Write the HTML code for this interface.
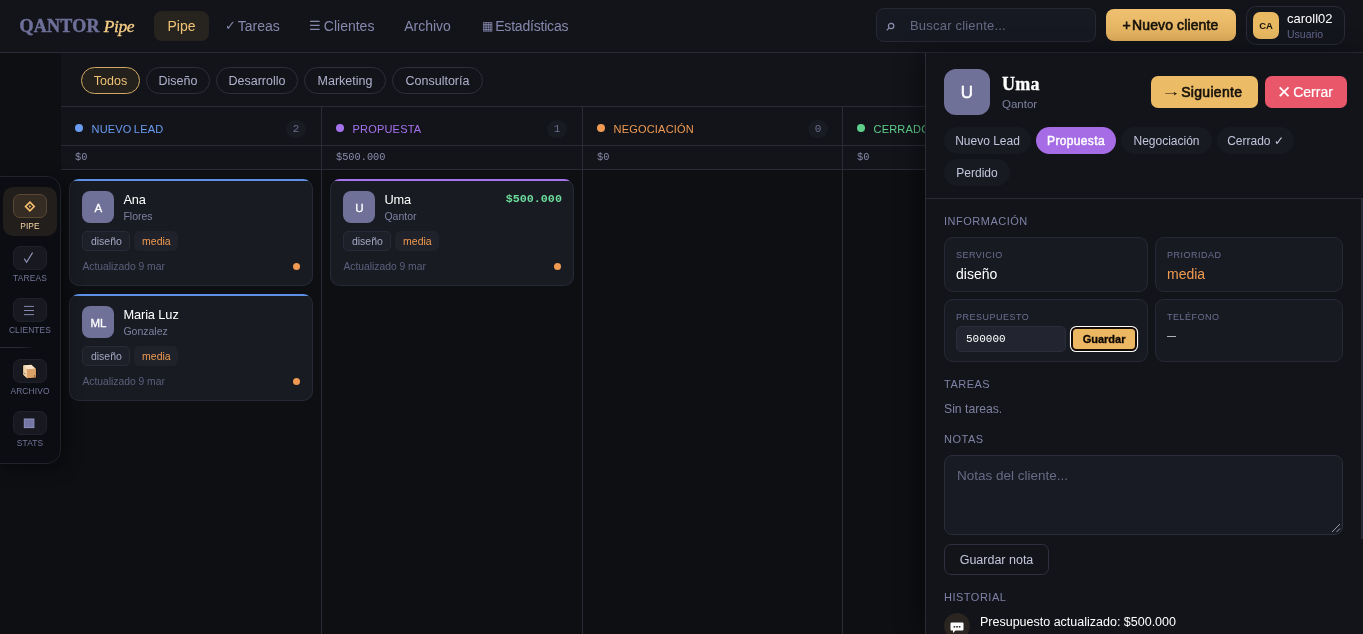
<!DOCTYPE html>
<html lang="es">
<head>
<meta charset="utf-8">
<title>Qantor Pipe</title>
<style>
*{box-sizing:border-box;margin:0;padding:0}
html,body{width:1363px;height:634px;overflow:hidden;background:#0e0f13;color:#fff;
  font-family:"Liberation Sans",sans-serif;font-size:14px}
.abs{position:absolute}
.mono{font-family:"Liberation Mono",monospace}
.serif{font-family:"Liberation Serif",serif}
#app{position:relative;width:1363px;height:634px;overflow:hidden;background:#0e0f13;will-change:transform}

/* ---------- top bar ---------- */
#top{position:absolute;left:0;top:0;width:1363px;height:53px;background:#13141a;border-bottom:1px solid #292b36}
#logo{position:absolute;left:19.6px;top:13.6px;height:24px;line-height:24px;font-size:18px;white-space:nowrap}
#logo b{font-weight:700;color:#6e7099;letter-spacing:.25px;-webkit-text-stroke:.45px #6e7099}
#logo i{color:#f5cd85;margin-left:4px;font-size:17.5px;letter-spacing:-.45px;-webkit-text-stroke:.35px #f5cd85}
.tab{position:absolute;top:11px;height:30px;line-height:30px;font-size:14px;color:#8688ad;white-space:nowrap;text-align:center;border-radius:8px}
.tab.on{background:#27241f;color:#f0c274}
.tab.l{text-align:left;padding-left:14px}
.tab .ic{display:inline-block;vertical-align:top;letter-spacing:0}
#search{position:absolute;left:876px;top:8px;width:220px;height:34px;border-radius:8px;background:#171922;border:1px solid #262935}
#search span{position:absolute;left:33px;top:0;line-height:33px;font-size:13px;color:#666a85;letter-spacing:.2px}
#newbtn{position:absolute;left:1106px;top:9px;width:130px;height:32px;border-radius:8px;background:linear-gradient(#efc170,#dfae5c);color:#14110a;font-weight:400;font-size:14px;line-height:32.5px;text-align:left;padding-left:16.5px;letter-spacing:.12px;-webkit-text-stroke:.6px #14110a;white-space:nowrap}
#user{position:absolute;left:1246px;top:6px;width:99px;height:39px;border-radius:10px;background:#14161d;border:1px solid #292b36}
#user .av{position:absolute;left:6px;top:5px;width:26px;height:27px;border-radius:7px;background:#e9b962;color:#15120b;font-size:9.5px;font-weight:700;line-height:27px;text-align:center}
#user .n{position:absolute;left:40px;top:4px;font-size:13px;line-height:16px;color:#fff}
#user .r{position:absolute;left:40px;top:20px;font-size:10.5px;line-height:14px;color:#62658a}

/* ---------- board ---------- */
#board{position:absolute;left:61px;top:53px;width:1302px;height:581px;background:#0e0f13}
#filters{position:absolute;left:0;top:0;width:1302px;height:54px;background:#13141a;border-bottom:1px solid #292b36}
.pill{position:absolute;top:14px;height:27px;line-height:26.5px;border-radius:14px;border:1px solid #2d2f3b;color:#b0b2cd;font-size:12.5px;text-align:center;white-space:nowrap}
.pill.on{border-color:#d0a862;color:#f0c274;background:#24201c}
.col{position:absolute;top:54px;width:261px;height:527px;border-right:1px solid #292b36}
.col .hd{position:absolute;left:0;top:0;right:0;height:39px;background:#13141a;border-bottom:1px solid #292b36}
.col .hd .dot{position:absolute;left:14px;top:17px;width:8px;height:8px;border-radius:50%}
.col .hd .t{position:absolute;left:30.5px;top:15px;line-height:14px;font-size:11px;letter-spacing:.2px;word-spacing:-1px;white-space:nowrap}
.col .hd .n{position:absolute;left:225px;top:12.5px;width:20px;height:18px;border-radius:9px;background:#191b23;color:#6a6d8c;font-size:11px;line-height:18px;text-align:center}
.col .tot{position:absolute;left:0;top:39px;right:0;height:24px;background:#13141a;border-bottom:1px solid #292b36;color:#8a8cac;font-size:10.3px;line-height:23px;padding-left:14px}
.card{position:absolute;left:8.4px;width:243.5px;height:107px;border-radius:10px;background:#191b23;box-shadow:inset 0 0 0 1px #262935;overflow:hidden}
.card .bar{position:absolute;left:0;right:0;top:0;height:2px}
.card .av{position:absolute;left:13px;top:12px;width:32px;height:32px;border-radius:8px;background:#6f7198;color:#fff;font-size:11.5px;font-weight:400;-webkit-text-stroke:.3px #fff;line-height:34px;text-align:center}
.card .nm{position:absolute;left:54px;top:13px;font-size:12.8px;letter-spacing:-.1px;line-height:16px;color:#fff}
.card .sub{position:absolute;left:54px;top:30px;font-size:10.5px;line-height:14px;color:#7d80a0}
.card .amt{position:absolute;right:12px;top:12.3px;font-size:11.7px;line-height:16px;color:#6cdc9c;font-weight:700}
.tag{position:absolute;top:52px;margin-left:1px;height:20px;line-height:18px;border-radius:5px;background:#1d1f29;border:1px solid #282b37;font-size:10.5px;text-align:center;color:#a4a7c2}
.tag.o{color:#f09a4e;border-color:#1f212b;background:#1f212b}
.card .upd{position:absolute;left:13px;top:81px;font-size:10.3px;line-height:14px;color:#5c5f7c}
.card .od{position:absolute;left:223.5px;top:83.5px;width:7.5px;height:7.5px;border-radius:50%;background:#ef9a52}

/* ---------- side nav ---------- */
#side{position:absolute;left:-1px;top:176px;width:62px;height:288px;background:#0c0d12;border:1px solid #1f212b;border-radius:0 14px 14px 0;box-shadow:4px 4px 18px rgba(0,0,0,.45)}
.si{position:absolute;left:3px;width:54px;height:49px;border-radius:10px}
.si.on{background:#211e1c}
.si .bx{position:absolute;left:10px;top:7px;width:34px;height:24px;border-radius:7px;background:#181920;border:1px solid #20222b}
.si.on .bx{background:#352c24;border-color:#594733}
.si .lb{position:absolute;left:-3px;top:35px;width:60px;text-align:center;font-size:8.4px;line-height:9px;letter-spacing:.15px;color:#74779b;padding-left:0}
.si.on .lb{color:#f3d7a4}
.si svg{position:absolute;left:-1px;top:-1px}

/* ---------- drawer ---------- */
#drawer{position:absolute;left:925px;top:53px;width:438px;height:581px;background:#13141a;border-left:1px solid #292b36;box-shadow:-6px 0 22px rgba(0,0,0,.42)}
#dhead{position:absolute;left:0;top:0;width:437px;height:146px;border-bottom:1px solid #292b36}
#dav{position:absolute;left:18px;top:16px;width:46px;height:46px;border-radius:12px;background:#6f7198;color:#fff;font-size:17px;font-weight:400;-webkit-text-stroke:.5px #fff;line-height:48px;text-align:center}
#dname{position:absolute;left:76px;top:20.4px;font-size:18px;line-height:22px;font-weight:700;color:#fff;letter-spacing:.3px;-webkit-text-stroke:.3px #fff}
#dsub{position:absolute;left:76px;top:44px;font-size:11.5px;line-height:14px;color:#7d80a0}
.btn{position:absolute;top:23px;height:32px;line-height:33px;border-radius:7px;font-size:14px;text-align:left;white-space:nowrap}
.btn .g{display:inline-block;vertical-align:top;letter-spacing:0;-webkit-text-stroke:0;font-weight:400}
#next{left:225px;width:107px;background:#ecbb66;color:#14110a;font-weight:400;letter-spacing:.3px;-webkit-text-stroke:.6px #14110a}
#close{left:339px;width:82px;background:#e9576b;color:#fff;-webkit-text-stroke:.2px #fff}
.st{position:absolute;height:27px;line-height:28.5px;border-radius:14px;background:#181a22;color:#c3c5dc;font-size:12px;text-align:center;white-space:nowrap}
.st.on{background:#a66ce6;color:#fff;font-weight:400;letter-spacing:.35px;-webkit-text-stroke:.45px #fff}
.sec{position:absolute;left:18px;margin-top:-1px;font-size:11px;line-height:12px;letter-spacing:.5px;color:#7f82a6}
.ic2{position:absolute;border-radius:9px;background:#181a22;border:1px solid #262935}
.ic2 .l{position:absolute;left:11px;top:11px;font-size:9px;line-height:12px;letter-spacing:.5px;color:#6c6f91}
.ic2 .v{position:absolute;left:11px;top:26.5px;font-size:14px;line-height:18px;color:#fff}

#binp{position:absolute;left:11px;top:26px;width:110px;height:26px;border-radius:5px;background:#22242f;border:1px solid #2a2d3a;color:#fff;font-size:11px;line-height:24px;padding-left:9px}
#bsave{position:absolute;left:127.8px;top:28.8px;width:62.6px;height:20.4px;border-radius:3.5px;background:#ecb762;color:#0a0500;font-weight:700;-webkit-text-stroke:.3px #0a0500;font-size:11px;line-height:20.6px;text-align:center;box-shadow:0 0 0 2px #140c04,0 0 0 3.1px #fff}
#notask{position:absolute;left:18px;top:348px;font-size:12.2px;line-height:16px;color:#7d80a0}
#notes{position:absolute;left:18px;top:402px;width:399px;height:80px;border-radius:8px;background:#191b24;border:1px solid #2a2d3a}
#notes span{position:absolute;left:12px;top:10.8px;font-size:13.5px;line-height:18px;color:#676a84}
#savenote{position:absolute;left:18px;top:491px;width:105px;height:31px;border-radius:7px;border:1px solid #2d303d;color:#c3c5dc;font-size:12.5px;line-height:30.5px;text-align:center}
#hic{position:absolute;left:18px;top:560px;width:26px;height:26px;border-radius:50%;background:#2a2521}
#htx{position:absolute;left:54px;top:561px;font-size:12.5px;line-height:16px;color:#fff;white-space:nowrap}
#sbar{position:absolute;left:435px;top:146px;width:2.4px;height:340px;background:#272937}
</style>
</head>
<body>
<div id="app">

<!-- BOARD -->
<div id="board">
  <div id="filters">
    <div class="pill on" style="left:20px;width:59px">Todos</div>
    <div class="pill" style="left:85px;width:64px">Diseño</div>
    <div class="pill" style="left:155px;width:82px">Desarrollo</div>
    <div class="pill" style="left:243px;width:82px">Marketing</div>
    <div class="pill" style="left:331px;width:91px">Consultoría</div>
  </div>

  <div class="col" style="left:0">
    <div class="hd"><span class="dot" style="background:#6a9cf2"></span><span class="t" style="color:#6a9cf2">NUEVO LEAD</span><span class="n mono">2</span></div>
    <div class="tot mono">$0</div>
    <div class="card" style="top:72px"><div class="bar" style="background:#5f90e8"></div>
      <div class="av">A</div><div class="nm">Ana</div><div class="sub">Flores</div>
      <div class="tag" style="left:12px;width:48px">diseño</div><div class="tag o" style="left:64px;width:44px">media</div>
      <div class="upd">Actualizado 9 mar</div><div class="od"></div></div>
    <div class="card" style="top:187px"><div class="bar" style="background:#5f90e8"></div>
      <div class="av">ML</div><div class="nm">Maria Luz</div><div class="sub">Gonzalez</div>
      <div class="tag" style="left:12px;width:48px">diseño</div><div class="tag o" style="left:64px;width:44px">media</div>
      <div class="upd">Actualizado 9 mar</div><div class="od"></div></div>
  </div>

  <div class="col" style="left:261px">
    <div class="hd"><span class="dot" style="background:#a673ee"></span><span class="t" style="color:#a673ee">PROPUESTA</span><span class="n mono">1</span></div>
    <div class="tot mono">$500.000</div>
    <div class="card" style="top:72px"><div class="bar" style="background:#a673ee"></div>
      <div class="av">U</div><div class="nm">Uma</div><div class="sub">Qantor</div><div class="amt mono">$500.000</div>
      <div class="tag" style="left:12px;width:48px">diseño</div><div class="tag o" style="left:64px;width:44px">media</div>
      <div class="upd">Actualizado 9 mar</div><div class="od"></div></div>
  </div>

  <div class="col" style="left:522px;width:260px">
    <div class="hd"><span class="dot" style="background:#f09a52"></span><span class="t" style="color:#f09a52">NEGOCIACIÓN</span><span class="n mono">0</span></div>
    <div class="tot mono">$0</div>
  </div>

  <div class="col" style="left:782px">
    <div class="hd"><span class="dot" style="background:#5fd08c"></span><span class="t" style="color:#5fd08c">CERRADO</span></div>
    <div class="tot mono">$0</div>
  </div>
</div>

<!-- SIDE NAV -->
<div id="side">
  <div class="si on" style="top:10px"><div class="bx"><svg width="34" height="24" viewBox="0 0 34 24"><path d="M16.9 8.2 L21.2 12.5 L16.9 16.8 L12.6 12.5 Z" fill="none" stroke="#f5bf6c" stroke-width="1.7"/><path d="M16.9 11.3 L18.1 12.5 L16.9 13.7 L15.7 12.5 Z" fill="#f5bf6c"/></svg></div><div class="lb">PIPE</div></div>
  <div class="si" style="top:62px"><div class="bx"><svg width="34" height="24" viewBox="0 0 34 24"><path d="M11.2 12.6 L13.6 16.2 L19.6 6.6" fill="none" stroke="#9799bd" stroke-width="1.1"/></svg></div><div class="lb">TAREAS</div></div>
  <div class="si" style="top:114px"><div class="bx"><svg width="34" height="24" viewBox="0 0 34 24"><path d="M11 8.4 H21 M11 12.5 H21 M11 16.6 H21" fill="none" stroke="#8587ab" stroke-width="1"/></svg></div><div class="lb">CLIENTES</div></div>
  <div class="abs" style="left:0;top:170px;width:34px;height:1px;background:linear-gradient(90deg,#292b36,#292b36 60%,rgba(35,37,47,0))"></div>
  <div class="si" style="top:175px"><div class="bx"><svg width="34" height="24" viewBox="0 0 34 24"><g transform="translate(1.6 2) scale(.92)"><path d="M9.3 4.6 L18.3 4.2 L23.2 8.4 L23.2 18 L13.4 18.8 L9.3 15 Z" fill="#e2b07a" stroke="#0d0a08" stroke-width="1.3" stroke-linejoin="round"/><path d="M9.3 4.6 L18.3 4.2 L23.2 8.4 L13.4 9 Z" fill="#f6e2cb"/><path d="M9.3 4.6 L13.4 9 L13.4 18.8 L9.3 15 Z" fill="#eecfa8"/><path d="M13.4 9 L23.2 8.4 L23.2 18 L13.4 18.8 Z" fill="#d9a067"/><circle cx="21.6" cy="16.3" r=".8" fill="#6b4a2a"/><circle cx="11" cy="13.6" r=".6" fill="#6b4a2a"/></g></svg></div><div class="lb">ARCHIVO</div></div>
  <div class="si" style="top:227px"><div class="bx"><svg width="34" height="24" viewBox="0 0 34 24"><rect x="11.3" y="8" width="9.6" height="8.6" fill="#7476a6" stroke="#9092bd" stroke-width="1"/></svg></div><div class="lb">STATS</div></div>
</div>

<!-- TOP BAR -->
<div id="top">
  <div id="logo" class="serif"><b>QANTOR</b><i>Pipe</i></div>
  <div class="tab on" style="left:154px;width:55px">Pipe</div>
  <div class="tab l" style="left:211px;width:81px"><span class="ic" style="width:12.7px;font-size:13px">✓</span>Tareas</div>
  <div class="tab l" style="left:295.8px;width:93px"><span class="ic" style="width:14px;font-size:12.5px;margin-left:-.5px;margin-right:.5px">☰</span>Clientes</div>
  <div class="tab" style="left:391px;width:73px">Archivo</div>
  <div class="tab l" style="left:467.7px;width:114px;letter-spacing:-.2px"><span class="ic" style="width:13.5px;font-size:12px">▦</span>Estadísticas</div>
  <div id="search"><svg width="12" height="12" viewBox="0 0 12 12" style="position:absolute;left:8px;top:12px"><circle cx="6.1" cy="5" r="2.7" fill="none" stroke="#8d8fb0" stroke-width="1.2"/><path d="M4.1 7 L1.6 9.4" stroke="#8d8fb0" stroke-width="1.1"/></svg><span>Buscar cliente...</span></div>
  <div id="newbtn"><span style="display:inline-block;width:9.5px;letter-spacing:0">+</span>Nuevo cliente</div>
  <div id="user"><div class="av">CA</div><div class="n">caroll02</div><div class="r">Usuario</div></div>
</div>

<!-- DRAWER -->
<div id="drawer">
  <div id="dhead">
    <div id="dav">U</div>
    <div id="dname" class="serif">Uma</div>
    <div id="dsub">Qantor</div>
    <div id="next" class="btn"><span class="g" style="width:14px;transform:scaleX(1.4);margin-left:13.3px;margin-right:2.9px;position:relative;top:-.8px">→</span>Siguiente</div>
    <div id="close" class="btn"><span class="g" style="width:15px;font-size:17px;margin-left:11.4px;margin-right:1.8px;text-align:center">✕</span>Cerrar</div>
    <div class="st" style="left:18px;top:74px;width:87px">Nuevo Lead</div>
    <div class="st on" style="left:110px;top:74px;width:80px">Propuesta</div>
    <div class="st" style="left:195px;top:74px;width:91px">Negociación</div>
    <div class="st" style="left:291px;top:74px;width:77px">Cerrado ✓</div>
    <div class="st" style="left:18px;top:106px;width:66px">Perdido</div>
  </div>
  <div class="sec" style="top:162.7px">INFORMACIÓN</div>
  <div class="ic2" style="left:18px;top:184px;width:204px;height:55px"><div class="l">SERVICIO</div><div class="v">diseño</div></div>
  <div class="ic2" style="left:229px;top:184px;width:188px;height:55px"><div class="l">PRIORIDAD</div><div class="v" style="color:#f09a4e">media</div></div>
  <div class="ic2" style="left:18px;top:246px;width:204px;height:63px"><div class="l">PRESUPUESTO</div>
    <div id="binp" class="mono">500000</div><div id="bsave">Guardar</div></div>
  <div class="ic2" style="left:229px;top:246px;width:188px;height:63px"><div class="l">TELÉFONO</div><div class="v" style="font-size:9px;top:26.5px">—</div></div>
  <div class="sec" style="top:326px">TAREAS</div>
  <div id="notask">Sin tareas.</div>
  <div class="sec" style="top:381px">NOTAS</div>
  <div id="notes"><span>Notas del cliente...</span>
    <svg width="10" height="10" viewBox="0 0 10 10" style="position:absolute;right:1px;bottom:1px"><path d="M9 1 L1 9 M9 5.5 L5.5 9" stroke="#9a9cb4" stroke-width="1" fill="none"/></svg></div>
  <div id="savenote">Guardar nota</div>
  <div class="sec" style="top:539px">HISTORIAL</div>
  <div id="hic"><svg width="26" height="26" viewBox="0 0 26 26"><path d="M7.5 9.5 h11 a1 1 0 0 1 1 1 v6 a1 1 0 0 1 -1 1 h-7 l-2.5 2.5 v-2.5 h-1.5 a1 1 0 0 1 -1 -1 v-6 a1 1 0 0 1 1 -1 z" fill="#fff"/><rect x="9.6" y="13" width="1.6" height="1.6" fill="#333"/><rect x="12.2" y="13" width="1.6" height="1.6" fill="#333"/><rect x="14.8" y="13" width="1.6" height="1.6" fill="#333"/></svg></div>
  <div id="htx">Presupuesto actualizado: $500.000</div>
  <div id="sbar"></div>
</div>

</div>
</body>
</html>
